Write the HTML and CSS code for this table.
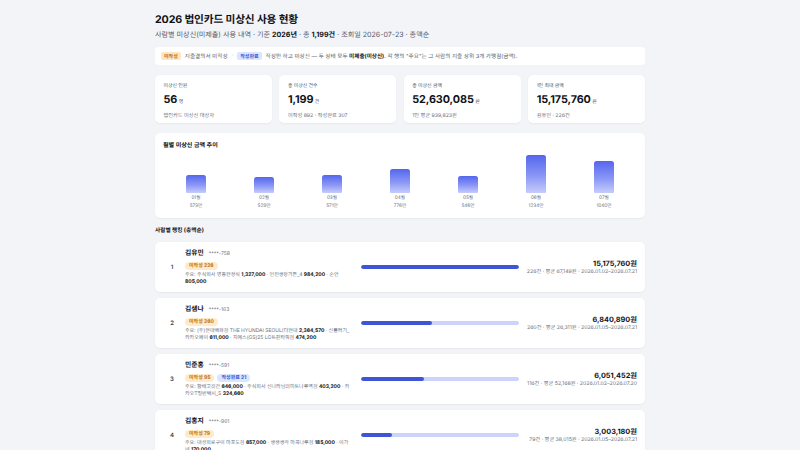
FILE: index.html
```html
<!DOCTYPE html>
<html lang="ko">
<head>
<meta charset="utf-8">
<title>2026 법인카드 미상신 사용 현황</title>
<link rel="stylesheet" href="styles.css">
</head>
<body>
<div class="page">
  <h1 class="title">2026 법인카드 미상신 사용 현황</h1>
  <p class="subtitle">사람별 미상신(미제출) 사용 내역 · 기준 <b>2026년</b> · 총 <b>1,199건</b> · 조회일 2026-07-23 · 총액순</p>

  <div class="legend">
    <span class="tag tag-orange">미작성</span>
    <span class="legend-text">지출결의서 미작성</span>
    <span class="legend-sep">·</span>
    <span class="tag tag-blue">작성완료</span>
    <span class="legend-text">작성만 하고 미상신 — 두 상태 모두 <b>미제출(미상신)</b>. 각 행의 "주요"는 그 사람의 지출 상위 3개 가맹점(금액).</span>
  </div>

  <div class="kpis">
    <div class="card kpi">
      <div class="kpi-label">미상신 인원</div>
      <div class="kpi-value">56<span class="unit">명</span></div>
      <div class="kpi-sub">법인카드 미상신 대상자</div>
    </div>
    <div class="card kpi">
      <div class="kpi-label">총 미상신 건수</div>
      <div class="kpi-value">1,199<span class="unit">건</span></div>
      <div class="kpi-sub">미작성 892 · 작성완료 307</div>
    </div>
    <div class="card kpi">
      <div class="kpi-label">총 미상신 금액</div>
      <div class="kpi-value">52,630,085<span class="unit">원</span></div>
      <div class="kpi-sub">1인 평균 939,823원</div>
    </div>
    <div class="card kpi">
      <div class="kpi-label">1인 최대 금액</div>
      <div class="kpi-value">15,175,760<span class="unit">원</span></div>
      <div class="kpi-sub">김유민 · 226건</div>
    </div>
  </div>

  <div class="card chart">
    <div class="chart-title">월별 미상신 금액 추이</div>
    <div class="bars">
      <div class="col"><div class="bar-area"><div class="bar" style="height:17.6px"></div></div><div class="m">01월</div><div class="v">573만</div></div>
      <div class="col"><div class="bar-area"><div class="bar" style="height:16.3px"></div></div><div class="m">02월</div><div class="v">529만</div></div>
      <div class="col"><div class="bar-area"><div class="bar" style="height:17.6px"></div></div><div class="m">03월</div><div class="v">571만</div></div>
      <div class="col"><div class="bar-area"><div class="bar" style="height:23.9px"></div></div><div class="m">04월</div><div class="v">776만</div></div>
      <div class="col"><div class="bar-area"><div class="bar" style="height:16.8px"></div></div><div class="m">05월</div><div class="v">546만</div></div>
      <div class="col"><div class="bar-area"><div class="bar" style="height:38px"></div></div><div class="m">06월</div><div class="v">1234만</div></div>
      <div class="col"><div class="bar-area"><div class="bar" style="height:32px"></div></div><div class="m">07월</div><div class="v">1040만</div></div>
    </div>
  </div>

  <div class="section-title">사람별 랭킹 (총액순)</div>

  <div class="list">
    <div class="card row">
      <div class="rank">1</div>
      <div class="info">
        <div class="name-line"><span class="name">김유민</span><span class="mask">****-758</span></div>
        <div class="badges"><span class="pill pill-orange">미작성 226</span></div>
        <div class="detail">주요: 주식회사 명동한정식 <b>1,327,000</b> · 인천생장가든_4 <b>984,200</b> · 순안 <b>805,000</b></div>
      </div>
      <div class="track"><div class="fill" style="width:100%"></div></div>
      <div class="amount">
        <div class="amt">15,175,760원</div>
        <div class="meta">226건 · 평균 67,149원 · 2026.01.02–2026.07.21</div>
      </div>
    </div>

    <div class="card row">
      <div class="rank">2</div>
      <div class="info">
        <div class="name-line"><span class="name">김샘나</span><span class="mask">****-163</span></div>
        <div class="badges"><span class="pill pill-orange">미작성 260</span></div>
        <div class="detail">주요: (주)현대백화점 THE HYUNDAI SEOUL(더현대 <b>2,364,570</b> · 신볼러기_카카오페이 <b>611,000</b> · 지에스(GS)25 LG트윈타워점 <b>474,200</b></div>
      </div>
      <div class="track"><div class="fill" style="width:45%"></div></div>
      <div class="amount">
        <div class="amt">6,840,890원</div>
        <div class="meta">260건 · 평균 26,311원 · 2026.01.05–2026.07.21</div>
      </div>
    </div>

    <div class="card row">
      <div class="rank">3</div>
      <div class="info">
        <div class="name-line"><span class="name">민준홍</span><span class="mask">****-591</span></div>
        <div class="badges"><span class="pill pill-orange">미작성 95</span><span class="pill pill-blue">작성완료 21</span></div>
        <div class="detail">주요: 함태고깃간 <b>646,000</b> · 주식회사 신나라님의미트나루역점 <b>403,200</b> · 카카오T일반택시_S <b>324,660</b></div>
      </div>
      <div class="track"><div class="fill" style="width:39.9%"></div></div>
      <div class="amount">
        <div class="amt">6,051,452원</div>
        <div class="meta">116건 · 평균 52,168원 · 2026.01.02–2026.07.20</div>
      </div>
    </div>

    <div class="card row">
      <div class="rank">4</div>
      <div class="info">
        <div class="name-line"><span class="name">김홍지</span><span class="mask">****-961</span></div>
        <div class="badges"><span class="pill pill-orange">미작성 79</span></div>
        <div class="detail">주요: 대성회로구이 마포도점 <b>657,000</b> · 생생생각 마곡나루점 <b>185,000</b> · 이가네 <b>170,000</b></div>
      </div>
      <div class="track"><div class="fill" style="width:19.8%"></div></div>
      <div class="amount">
        <div class="amt">3,003,180원</div>
        <div class="meta">79건 · 평균 38,015원 · 2026.01.05–2026.07.21</div>
      </div>
    </div>
  </div>
</div>
</body>
</html>
```
FILE: styles.css
```css
* { box-sizing: border-box; }
html, body { margin: 0; padding: 0; }
body {
  background: #f3f4f7;
  font-family: "Inter", "Noto Sans CJK KR", sans-serif;
  color: #111827;
  text-rendering: geometricPrecision;
}
.page {
  width: 490px;
  margin: 0 auto;
  padding-top: 12px;
}
.title {
  margin: 0;
  font-size: 10.7px;
  line-height: 16px;
  font-weight: 700;
  letter-spacing: -0.15px;
  color: #111318;
}
.subtitle {
  margin: 3px 0 0;
  font-size: 7.1px;
  line-height: 8px;
  color: #555c6a;
}
.subtitle b { color: #111318; font-weight: 700; }

.legend {
  margin-top: 8px;
  height: 18px;
  background: #fff;
  border-radius: 4px;
  display: flex;
  align-items: center;
  gap: 4px;
  padding: 0 6px;
  font-size: 5.6px;
  color: #555c6a;
  white-space: nowrap;
}
.legend b { color: #111318; font-weight: 700; }
.legend-sep { color: #9aa0ab; }
.tag {
  display: inline-flex;
  align-items: center;
  height: 8px;
  padding: 0 3px;
  border-radius: 2px;
  font-weight: 700;
  font-size: 5px;
}
.tag-orange { background: #fde6c0; color: #c46a12; }
.tag-blue { background: #dce5ff; color: #3553d4; }

.card {
  background: #fff;
  border-radius: 5px;
  box-shadow: 0 0.5px 1.5px rgba(20, 30, 60, 0.05);
}

.kpis {
  margin-top: 10px;
  display: grid;
  grid-template-columns: repeat(4, 1fr);
  gap: 7.5px;
}
.kpi {
  height: 48px;
  padding: 8px 8.5px 0;
}
.kpi-label {
  font-size: 4.9px;
  line-height: 7px;
  color: #4b5160;
}
.kpi-value {
  margin-top: 2.5px;
  font-size: 10.8px;
  line-height: 13px;
  font-weight: 700;
  letter-spacing: -0.1px;
  color: #111318;
}
.unit {
  font-size: 4.8px;
  font-weight: 500;
  color: #6b7280;
  margin-left: 1.5px;
}
.kpi-sub {
  margin-top: 4px;
  font-size: 5.2px;
  line-height: 7px;
  color: #6b7280;
}

.chart {
  margin-top: 10px;
  height: 85px;
  padding: 9px 7px 0;
}
.chart-title {
  font-size: 6.1px;
  line-height: 7px;
  font-weight: 700;
  color: #111318;
  padding-left: 1px;
}
.bars {
  margin-top: 4px;
  display: flex;
}
.col {
  flex: 1;
  display: flex;
  flex-direction: column;
  align-items: center;
}
.bar-area {
  height: 40px;
  display: flex;
  align-items: flex-end;
}
.bar {
  width: 20px;
  border-radius: 2.5px 2.5px 1px 1px;
  background: linear-gradient(180deg, #5566ee 0%, #8a97f5 55%, #c6ccfb 100%);
}
.m, .v {
  font-size: 4.7px;
  line-height: 7.5px;
  color: #6b7280;
}
.m { margin-top: 2px; }
.v { line-height: 6px; }

.section-title {
  margin-top: 9px;
  font-size: 5.7px;
  line-height: 8px;
  font-weight: 700;
  color: #111318;
}

.list {
  margin-top: 7px;
  display: flex;
  flex-direction: column;
  gap: 6px;
}
.row {
  height: 50px;
  display: grid;
  grid-template-columns: 10px 184px 158px 1fr;
  align-items: center;
  padding: 0 8px 0 12px;
}
.rank {
  font-size: 6px;
  font-weight: 600;
  color: #374151;
  text-align: center;
}
.info {
  min-width: 0;
  padding: 0 10px 0 8px;
}
.name-line {
  display: flex;
  align-items: baseline;
  gap: 5px;
  line-height: 9px;
}
.name {
  font-size: 6.8px;
  font-weight: 700;
  color: #111318;
}
.mask {
  font-size: 5px;
  color: #6b7280;
}
.badges {
  margin-top: 3px;
  display: flex;
  gap: 3px;
}
.pill {
  display: inline-flex;
  align-items: center;
  height: 8px;
  padding: 0 4px;
  border-radius: 4px;
  font-size: 5px;
  font-weight: 700;
}
.pill-orange { background: #fdebcb; color: #c0700f; }
.pill-blue { background: #dde6ff; color: #3553d4; }
.detail {
  margin-top: 2px;
  font-size: 5px;
  line-height: 7.3px;
  color: #6b7280;
}
.detail b { color: #111318; font-weight: 700; }

.track {
  height: 3.5px;
  border-radius: 2px;
  background: #ccd4fb;
  overflow: hidden;
}
.fill {
  height: 100%;
  border-radius: 2px;
  background: #4054d6;
}
.amount {
  text-align: right;
  padding-left: 4px;
}
.amt {
  font-size: 7.3px;
  line-height: 10px;
  font-weight: 700;
  color: #111318;
}
.meta {
  font-size: 5.2px;
  line-height: 6px;
  color: #6b7280;
  white-space: nowrap;
}
```
